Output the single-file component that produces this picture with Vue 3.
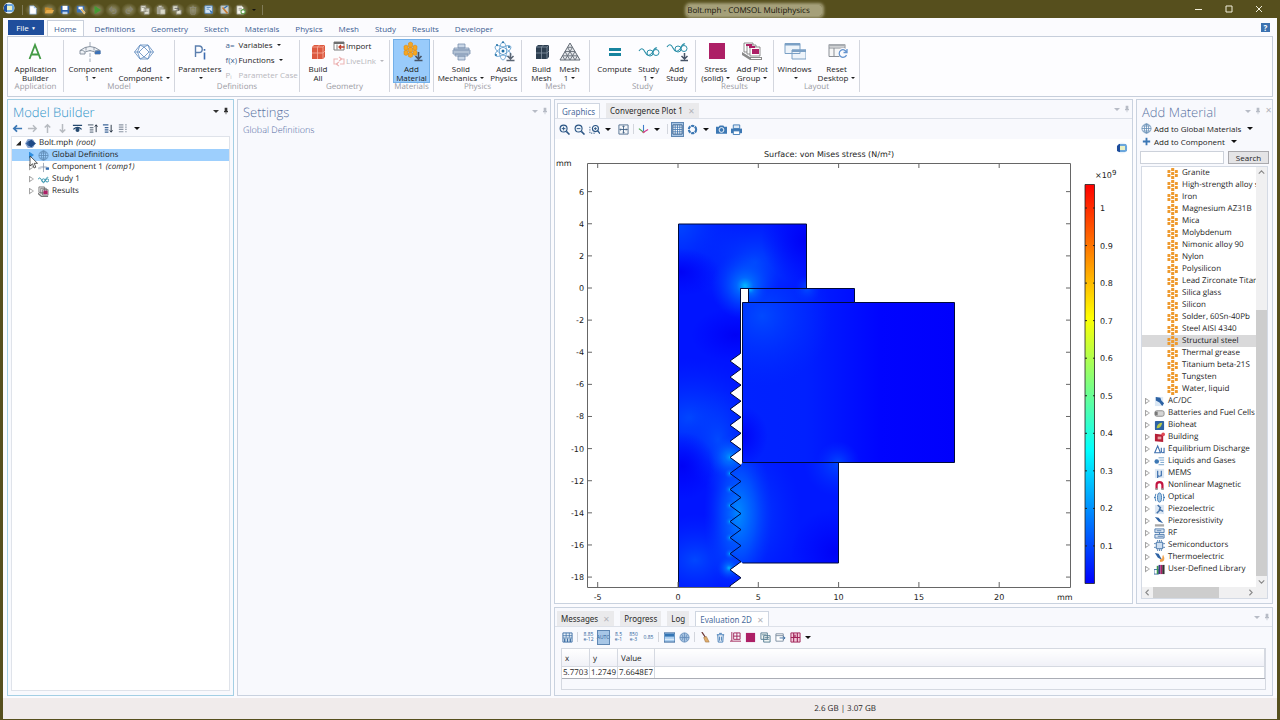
<script setup>
const quick = ['doc', 'folder', 'save', 'saveas', 'play', 'undo', 'redo', 'copy', 'paste', 'dup', 'trash', 'selbox', 'pick', 'docadd']
const menus = ['Home', 'Definitions', 'Geometry', 'Sketch', 'Materials', 'Physics', 'Mesh', 'Study', 'Results', 'Developer']

const groups = [
  { name: 'Application', big: [{ icon: 'app', a: 'Application', b: 'Builder' }] },
  { name: 'Model', big: [{ icon: 'component', a: 'Component', b: '1', drop: true }, { icon: 'addcomp', a: 'Add', b: 'Component', drop: true }] },
  {
    name: 'Definitions',
    big: [{ icon: 'params', a: 'Parameters', b: '', drop: true }],
    small: [
      { glyph: 'a=', text: 'Variables', drop: true },
      { glyph: 'f(x)', text: 'Functions', drop: true },
      { glyph: 'Pᵢ', text: 'Parameter Case', off: true }
    ]
  },
  {
    name: 'Geometry',
    big: [{ icon: 'buildall', a: 'Build', b: 'All' }],
    small: [
      { icon: 'import', text: 'Import' },
      { icon: 'livelink', text: 'LiveLink', drop: true, off: true }
    ]
  },
  { name: 'Materials', big: [{ icon: 'addmat', a: 'Add', b: 'Material', on: true }] },
  { name: 'Physics', big: [{ icon: 'solid', a: 'Solid', b: 'Mechanics', drop: true }, { icon: 'addphys', a: 'Add', b: 'Physics' }] },
  { name: 'Mesh', big: [{ icon: 'buildmesh', a: 'Build', b: 'Mesh' }, { icon: 'mesh', a: 'Mesh', b: '1', drop: true }] },
  { name: 'Study', big: [{ icon: 'compute', a: 'Compute', b: '' }, { icon: 'study', a: 'Study', b: '1', drop: true }, { icon: 'addstudy', a: 'Add', b: 'Study' }] },
  { name: 'Results', big: [{ icon: 'stress', a: 'Stress', b: '(solid)', drop: true }, { icon: 'plotgroup', a: 'Add Plot', b: 'Group', drop: true }] },
  { name: 'Layout', big: [{ icon: 'windows', a: 'Windows', b: '', drop: true }, { icon: 'reset', a: 'Reset', b: 'Desktop', drop: true }] }
]

const treeTools = ['left', 'right', 'up', 'down', 'eye', 'listup', 'listdown', 'listmore']
const tree = [
  { icon: 'globe', text: 'Global Definitions', on: true },
  { icon: 'comp', text: 'Component 1', note: '(comp1)' },
  { icon: 'wave', text: 'Study 1' },
  { icon: 'results', text: 'Results' }
]

const materials = ['Granite', 'High-strength alloy steel', 'Iron', 'Magnesium AZ31B', 'Mica', 'Molybdenum', 'Nimonic alloy 90', 'Nylon', 'Polysilicon', 'Lead Zirconate Titanate', 'Silica glass', 'Silicon', 'Solder, 60Sn-40Pb', 'Steel AISI 4340', 'Structural steel', 'Thermal grease', 'Titanium beta-21S', 'Tungsten', 'Water, liquid']
const libraries = [
  ['acdc', 'AC/DC'], ['battery', 'Batteries and Fuel Cells'], ['bioheat', 'Bioheat'], ['building', 'Building'],
  ['delta', 'Equilibrium Discharge'], ['liquid', 'Liquids and Gases'], ['mems', 'MEMS'], ['magnet', 'Nonlinear Magnetic'],
  ['optical', 'Optical'], ['piezo', 'Piezoelectric'], ['piezor', 'Piezoresistivity'], ['rf', 'RF'],
  ['semi', 'Semiconductors'], ['thermo', 'Thermoelectric'], ['books', 'User-Defined Library']
]

/* Plot coordinates: 16.06 units per millimetre, origin at (678, 288) */
const px = (mm) => 678 + mm * 16.06
const py = (mm) => 288 - mm * 16.06
const xTicks = [-5, 0, 5, 10, 15, 20]
const yTicks = [6, 4, 2, 0, -2, -4, -6, -8, -10, -12, -14, -16, -18]
const barTicks = [1, 0.9, 0.8, 0.7, 0.6, 0.5, 0.4, 0.3, 0.2, 0.1]
const barY = (v) => 208 + (1 - v) * 375.5

const tooth = 16.06
const roots = Array.from({ length: 15 }, (_, i) => 361 + i * tooth)
const zigzag = roots.map((y) => `L730 ${y} L741 ${y + tooth / 2}`)
zigzag[zigzag.length - 1] = `L730 ${roots[14]} V587.5`
const bolt = `M678.5 224 H806.5 V288.5 H740.5 V353.5 ${zigzag.join(' ')} H678.5 Z`
const mated = roots.slice(6, 13)
const nut = `M742.5 462.5 L741 465 ${mated.slice(1).map((y) => `L730 ${y} L741 ${y + tooth / 2}`).join(' ')} L742.5 563 H838.5 V462.5 Z`
</script>

<template>
  <svg class="defs" aria-hidden="true">
    <symbol id="i-logo" viewBox="0 0 12 12"><circle cx="6" cy="6" r="5.500" fill="#e8f1fb"/><path d="M1 4l2-2h6v8H3l-2-1z" fill="#1d4d9c"/><path d="M4 2h6l1 2v5l-2 1H4z" fill="#6aa6dc"/><rect x="4" y="4" width="5" height="4" fill="#e9f0c4"/></symbol>
    <symbol id="i-doc" viewBox="0 0 12 12"><path d="M2 1h5l3 3v7H2z" fill="#fff" stroke="#6a92c0" stroke-width=".7"/><path d="M7 1v3h3" fill="#9fc0e6"/></symbol>
    <symbol id="i-folder" viewBox="0 0 12 12"><path d="M1 3h4l1 1h4v6H1z" fill="#c98d2c"/><path d="M3 6h9l-2 4H1z" fill="#e5ac4c"/></symbol>
    <symbol id="i-save" viewBox="0 0 12 12"><path d="M1 1h10v9H1z" fill="#2a5fa8"/><path d="M3 1h6v5H3z" fill="#fff"/><path d="M3 8h6v3H3z" fill="#bcd2ec"/></symbol>
    <symbol id="i-saveas" viewBox="0 0 12 12"><path d="M1 1h9v8H1z" fill="#3b70b6"/><path d="M3 2h5v3H3z" fill="#fff"/><path d="M5 5l2-1 4 5-1 2z" fill="#e9b353" stroke="#fff" stroke-width=".5"/></symbol>
    <symbol id="i-play" viewBox="0 0 12 12"><path d="M3 1l8 5-8 5z" fill="#459a35"/></symbol>
    <symbol id="i-undo" viewBox="0 0 12 12"><path d="M3 5h4a2 2 0 0 1 0 5H5M5 2L2 5l3 3" fill="none" stroke="#85836f" stroke-width="1.600"/></symbol>
    <symbol id="i-redo" viewBox="0 0 12 12"><path d="M9 5H5a2 2 0 0 0 0 5h2M7 2l3 3-3 3" fill="none" stroke="#85836f" stroke-width="1.600"/></symbol>
    <symbol id="i-copy" viewBox="0 0 12 12"><path d="M1 1h6v7H1zM5 4h6v7H5z" fill="#eeeedf" stroke="#8a8878"/><path d="M6 6h4M6 8h4M2 3h4" stroke="#8a8878" stroke-width=".8"/></symbol>
    <symbol id="i-paste" viewBox="0 0 12 12"><path d="M1 2h8v9H1z" fill="#a5a392"/><path d="M3 1h4v2H3zM5 5h6v6H5z" fill="#dad9c9" stroke="#8a8878" stroke-width=".6"/></symbol>
    <symbol id="i-dup" viewBox="0 0 12 12"><path d="M1 1h6v6H1zM5 6h6v5H5z" fill="#e3e2d2" stroke="#7e7c6c"/><path d="M3 4h5v3" fill="none" stroke="#555"/></symbol>
    <symbol id="i-trash" viewBox="0 0 12 12"><path d="M2 3h8M5 1.500h2M3 3l.5 8h5L9 3M5 5v5M7 5v5" fill="none" stroke="#8e8c78"/></symbol>
    <symbol id="i-selbox" viewBox="0 0 12 12"><path d="M1 1h9v9H1z" fill="#d6e6f5" stroke="#4e83bd"/><path d="M3 3h5M3 5h3" stroke="#4e83bd"/><path d="M6 5l5 4-2 0 0 2z" fill="#2a6cb1"/></symbol>
    <symbol id="i-pick" viewBox="0 0 12 12"><path d="M1 1h9v9H1z" fill="#cfd0ca" stroke="#93a9b8" stroke-width=".8"/><path d="M3 3l6 7" stroke="#c57c35" stroke-width="2"/><path d="M9 1l-4 3" stroke="#2a6cb1" stroke-width="1.400"/></symbol>
    <symbol id="i-docadd" viewBox="0 0 12 12"><path d="M1 1h6l2 2v8H1z" fill="#fafaf0" stroke="#8a8878" stroke-width=".8"/><path d="M3 4h4M3 6h3" stroke="#777" stroke-width=".8"/><circle cx="8.500" cy="8" r="2.500" fill="#fff" stroke="#5d9d49" stroke-width="1.300"/></symbol>

    <symbol id="i-app" viewBox="0 0 22 22"><path d="M5.500 18L11 4l5.500 14M7.500 13.500h7" fill="none" stroke="#439a45" stroke-width="1.800"/></symbol>
    <symbol id="i-component" viewBox="0 0 22 22"><path d="M11 1v20" stroke="#8a97a8" stroke-width=".8" stroke-dasharray="4 1.500"/><path d="M1 13V9.500q10-8 20 0V13h-5v-2q-5-3-10 0v2z" fill="#eef1f5" stroke="#7d8997" stroke-width=".9"/><path d="M16 9.500h5.500V13H16z" fill="#3d72b8"/><path d="M1 9.500q3-1 5 1.500M21 9.500q-3-1-5 1.500M7 6v3.500M15 6v3.500" fill="none" stroke="#7d8997" stroke-width=".8"/></symbol>
    <symbol id="i-addcomp" viewBox="0 0 22 22"><path d="M7 4h8l5.500 7L15 18H7L1.500 11z M7 4l-2.500 7L7 18M15 4l2.500 7L15 18M11 6l5 5-5 5-5-5z M1.500 11H6M16 11h4.500M7 4l4 2 4-2M7 18l4-2 4 2" fill="none" stroke="#6c94c4" stroke-width=".9"/></symbol>
    <symbol id="i-params" viewBox="0 0 22 22"><path d="M6.500 16V5h3.500a3.200 3.200 0 0 1 0 6.500H6.500" fill="none" stroke="#5b7fae" stroke-width="1.400"/><path d="M15.500 11.500v7M15.500 8v1.700" stroke="#3d6cb0" stroke-width="1.600"/></symbol>
    <symbol id="i-buildall" viewBox="0 0 22 22"><path d="M5 6l2-2h11v12l-2 2H5z" fill="#dc5a41"/><path d="M5 6h11v12M10.500 6v12M5 12h11M7 4l-2 2M12.500 4l-2 2M18 4l-2 2M16 12l2-2" fill="none" stroke="#f7b0a0" stroke-width=".8"/></symbol>
    <symbol id="i-buildmesh" viewBox="0 0 22 22"><path d="M5 6l2-2h11v12l-2 2H5z" fill="#2c3e50"/><path d="M5 6h11v12M10.500 6v12M5 12h11M7 4l-2 2M12.500 4l-2 2M18 4l-2 2M16 12l2-2" fill="none" stroke="#8796a4" stroke-width=".8"/></symbol>
    <symbol id="i-addmat" viewBox="0 0 22 22"><g fill="#f5a623" stroke="#dd850c" stroke-width=".5"><path d="M7.500 2l2-1 2 1v3.500l-2 1-2-1zM3 5l2-1 2 1v3.500l-2 1-2-1zM12 5l2-1 2 1v3.500l-2 1-2-1zM7.500 7l2-1 2 1v3.500l-2 1-2-1zM3 10l2-1 2 1v3.500l-2 1-2-1zM12 10l2-1 2 1v3.500l-2 1-2-1zM7.500 12l2-1 2 1v3.500l-2 1-2-1z"/></g><path d="M17.500 11v7M14.500 15l3 3 3-3M13.500 19.500h8" fill="none" stroke="#465366" stroke-width="1.600"/></symbol>
    <symbol id="i-solid" viewBox="0 0 22 22"><path d="M8 3h7v4H8zM4 7h15v2H4zM3 9h17v4H3zM5 13h13v2H5zM8 15h7v4H8z" fill="#c9d6e6" stroke="#7890ad" stroke-width=".8"/><path d="M3 11h17" stroke="#7890ad" stroke-width=".6"/></symbol>
    <symbol id="i-addphys" viewBox="0 0 22 22"><g fill="none" stroke="#5d9ccc" stroke-width=".8"><ellipse cx="10" cy="10" rx="3.500" ry="9"/><ellipse cx="10" cy="10" rx="3.500" ry="9" transform="rotate(60 10 10)"/><ellipse cx="10" cy="10" rx="3.500" ry="9" transform="rotate(-60 10 10)"/></g><g fill="#1c6ea4"><circle cx="10" cy="10" r="1.500"/><circle cx="4" cy="4" r="1"/><circle cx="16" cy="6" r="1"/><circle cx="3" cy="14" r="1"/><circle cx="10" cy="1.300" r="1"/></g><path d="M17.500 12v6M14.500 15l3 3 3-3M13.500 19.500h8" fill="none" stroke="#5b6675" stroke-width="1.500"/></symbol>
    <symbol id="i-mesh" viewBox="0 0 22 22"><path d="M11 2l10 17H1z" fill="#e3e6ea" stroke="#656d77"/><path d="M8.500 6.300h5M6 10.500h10M3.500 14.800h15M8.500 6.300l7.500 12.700M13.500 6.300L6 19M6 10.500l5 8.500M16 10.500L11 19M3.500 14.800L6 19M18.500 14.800L16 19" fill="none" stroke="#656d77" stroke-width=".9"/></symbol>
    <symbol id="i-compute" viewBox="0 0 22 22"><path d="M5 7h12v3H5zM5 12h12v3H5z" fill="#17849f"/></symbol>
    <symbol id="i-study" viewBox="0 0 22 22"><path d="M1 10q3-5 6 1t7 1q3-6 5-5" fill="none" stroke="#2b8fa8" stroke-width="1.100"/><circle cx="12" cy="12" r="3" fill="none" stroke="#2b8fa8"/><circle cx="18" cy="11.500" r="3" fill="none" stroke="#2b8fa8"/></symbol>
    <symbol id="i-addstudy" viewBox="0 0 22 22"><path d="M1 6q3-5 6 1t7 1q3-6 5-5" fill="none" stroke="#2b8fa8" stroke-width="1.100"/><circle cx="12" cy="8" r="3" fill="none" stroke="#2b8fa8"/><circle cx="18" cy="7.500" r="3" fill="none" stroke="#2b8fa8"/><path d="M18.500 12v6M15.500 15l3 3 3-3M14.500 19.500h7.500" fill="none" stroke="#465366" stroke-width="1.500"/></symbol>
    <symbol id="i-stress" viewBox="0 0 22 22"><path d="M4 2h16v16H4z" fill="#ad1f66"/></symbol>
    <symbol id="i-plotgroup" viewBox="0 0 22 22"><g fill="#fff" stroke="#757575" stroke-width=".8"><path d="M3 2h9v9H3z"/><path d="M6 4h9v9H6z"/><path d="M9 6h10v9H9z"/></g><path d="M5 3h6v2H5zM8 5h6v2H8zM11 8h7v5h-7z" fill="#ad1f66"/><path d="M1 11l8 5h12v3H9l-8-5z" fill="#8a8a8a"/><path d="M10 17.500h10" stroke="#fff"/></symbol>
    <symbol id="i-windows" viewBox="0 0 22 22"><g fill="#eef4fa" stroke="#7ba0c5"><path d="M1 2.500h15v10H1zM8 9h14v9H8z"/></g><path d="M1 2h15v2.500H1zM8 8.500h14v2.500H8z" fill="#7ba0c5"/></symbol>
    <symbol id="i-reset" viewBox="0 0 22 22"><path d="M3 3.500h16v12H3zM3 7h16M8 7v8.500" fill="#f6f6f6" stroke="#8a8f96"/><path d="M3 3h16v2.500H3z" fill="#a8acb1"/><circle cx="17" cy="12" r="5" fill="#fbfbfe"/><path d="M20.500 11a3.800 3.800 0 1 0 0 3M21 8v3.500h-3.500" fill="none" stroke="#6594cf" stroke-width="1.300"/></symbol>
    <symbol id="i-import" viewBox="0 0 12 12"><path d="M1 2h10v8H1zM4 4.500v5" fill="#fff" stroke="#6f6f6f" stroke-width=".9"/><path d="M1 2h10v2H1z" fill="#6f6f6f"/><path d="M11.500 7H6M8 5L6 7l2 2" fill="none" stroke="#c33d27" stroke-width="1.300"/></symbol>
    <symbol id="i-livelink" viewBox="0 0 12 12"><path d="M5 4H1v5h4M7 4h4v5H7M6 2l3 2-3 2M6 7L3 9l3 2" fill="none" stroke="#edb6b6" stroke-width="1.100"/></symbol>

    <symbol id="i-left" viewBox="0 0 12 12"><path d="M11 6H2M5.500 2.500L2 6l3.500 3.500" fill="none" stroke="#3b77b5" stroke-width="1.900"/></symbol>
    <symbol id="i-right" viewBox="0 0 12 12"><path d="M1 6h9M6.500 2.500L10 6 6.500 9.500" fill="none" stroke="#b6bac0" stroke-width="1.600"/></symbol>
    <symbol id="i-up" viewBox="0 0 12 12"><path d="M6 11V2M3 5l3-3 3 3" fill="none" stroke="#b6bac0" stroke-width="1.600"/></symbol>
    <symbol id="i-down" viewBox="0 0 12 12"><path d="M6 1v9M3 7l3 3 3-3" fill="none" stroke="#b6bac0" stroke-width="1.600"/></symbol>
    <symbol id="i-eye" viewBox="0 0 12 12"><path d="M1 2.500h10M1.500 7Q6 2.500 10.500 7" fill="none" stroke="#24496f" stroke-width="1.400"/><circle cx="6" cy="7.500" r="2.200" fill="#24496f"/></symbol>
    <symbol id="i-listup" viewBox="0 0 12 12"><path d="M1 2h6M3 5h4M3 7.500h4M3 10h4" stroke="#72808f" stroke-width="1.200"/><path d="M10 10V2M8.500 4L10 2l1.500 2" fill="none" stroke="#222f40"/></symbol>
    <symbol id="i-listdown" viewBox="0 0 12 12"><path d="M1 2h6M3 5h4M3 7.500h4M3 10h4" stroke="#3d6597" stroke-width="1.400"/><path d="M10 2v8M8.500 8l1.500 2 1.500-2" fill="none" stroke="#222f40"/></symbol>
    <symbol id="i-listmore" viewBox="0 0 12 12"><path d="M2 2h5M2 4.500h5M2 7h5M2 9.500h5M9 2h1.500M9 4.500h1.500M9 7h1.500M9 9.500h1.500" stroke="#8b95a3" stroke-width="1.200"/></symbol>
    <symbol id="i-root" viewBox="0 0 12 12"><path d="M3 1h5l2 2v6l-2 2H3L0 6z" fill="#8aa5cf"/><path d="M7 2l5 4-5 4-4-2V4z" fill="#1f4a86"/><path d="M1 6l3-3v6z" fill="#35619f"/></symbol>
    <symbol id="i-globe" viewBox="0 0 12 12"><g fill="none" stroke="#5a86b0" stroke-width=".8"><circle cx="6" cy="6" r="5"/><ellipse cx="6" cy="6" rx="2.300" ry="5"/><path d="M1 6h10M2 3.300h8M2 8.700h8M6 1v10"/></g></symbol>
    <symbol id="i-comp" viewBox="0 0 12 12"><path d="M0 8V6q6-4 12 0v2H9V7q-3-1-6 0v1z" fill="#c9cfd9"/><path d="M8.500 6H12v2.500H8.500z" fill="#336cb3"/><path d="M6 1v10" stroke="#8592a3" stroke-width=".8"/></symbol>
    <symbol id="i-wave" viewBox="0 0 12 12"><path d="M0 6q2-4 4 1t4 0q2-5 3-3" fill="none" stroke="#2b8fa8"/><circle cx="6" cy="7" r="1.700" fill="none" stroke="#2b8fa8"/><circle cx="10" cy="7" r="1.700" fill="none" stroke="#2b8fa8"/></symbol>
    <symbol id="i-results" viewBox="0 0 12 12"><path d="M1 1h6v6H1zM3 2.500h6v6H3zM5 4h6v6H5z" fill="#eee" stroke="#666" stroke-width=".8"/><path d="M6 5h4.500v4H6z" fill="#ad1f66"/><path d="M0 8l4 3.500h7" fill="none" stroke="#777" stroke-width="1.500"/></symbol>
    <symbol id="i-plus" viewBox="0 0 12 12"><path d="M6 2v8M2 6h8" stroke="#3b77b5" stroke-width="2"/></symbol>
    <symbol id="i-pin" viewBox="0 0 12 12"><path d="M4 1h4v5h1v2H3V6h1zM5.500 8h1v3h-1z" fill="currentColor"/></symbol>

    <symbol id="i-zin" viewBox="0 0 12 12"><circle cx="5" cy="5" r="3.800" fill="#eef4fa" stroke="#2b5584" stroke-width="1.200"/><path d="M8 8l3.500 3.500" stroke="#2b5584" stroke-width="1.700"/><path d="M3 5h4M5 3v4" stroke="#2b5584"/></symbol>
    <symbol id="i-zout" viewBox="0 0 12 12"><circle cx="5" cy="5" r="3.800" fill="#eef4fa" stroke="#2b5584" stroke-width="1.200"/><path d="M8 8l3.500 3.500" stroke="#2b5584" stroke-width="1.700"/><path d="M3 5h4" stroke="#2b5584"/></symbol>
    <symbol id="i-zbox" viewBox="0 0 12 12"><path d="M1 3v7h6" fill="none" stroke="#2b5584" stroke-dasharray="1.500 1.200"/><circle cx="7" cy="5" r="3.300" fill="#eef4fa" stroke="#2b5584" stroke-width="1.200"/><path d="M9.500 7.500L12 10.500" stroke="#2b5584" stroke-width="1.600"/><path d="M5.500 5h3M7 3.500v3" stroke="#2b5584"/></symbol>
    <symbol id="i-extents" viewBox="0 0 12 12"><path d="M1 1h10v10H1z" fill="#f4f6f9" stroke="#516e8f"/><path d="M6 2v8M2 6h8M5 3l1-1 1 1M5 9l1 1 1-1M3 5L2 6l1 1M9 5l1 1-1 1" fill="none" stroke="#35587e" stroke-width=".9"/></symbol>
    <symbol id="i-axes" viewBox="0 0 12 12"><path d="M6 8V1" stroke="#3f7dc9" stroke-width="1.200"/><path d="M6 9l5-3" stroke="#d2338c" stroke-width="1.300"/><path d="M6 9L1 5" stroke="#47a84a" stroke-width="1.200"/><circle cx="6" cy="9" r="1.200" fill="#c8557c"/></symbol>
    <symbol id="i-grid" viewBox="0 0 12 12"><path d="M1 1h10v10H1z" fill="#fff" stroke="#2b5584"/><path d="M3.500 1v10M6 1v10M8.500 1v10M1 3.500h10M1 6h10M1 8.500h10" stroke="#4478b0" stroke-width=".9"/></symbol>
    <symbol id="i-wheel" viewBox="0 0 12 12"><circle cx="6" cy="6" r="4" fill="none" stroke="#3d78b4" stroke-width="2.300" stroke-dasharray="3.400 .8"/></symbol>
    <symbol id="i-camera" viewBox="0 0 12 12"><path d="M0 3h3l1-1.500h4L9 3h3v7.500H0z" fill="#3d78b4"/><circle cx="6" cy="6.500" r="2.600" fill="#3d78b4" stroke="#fff"/></symbol>
    <symbol id="i-print" viewBox="0 0 12 12"><path d="M2.500 1h7v4h-7z" fill="#dce8f4" stroke="#3d78b4"/><path d="M0 5h12v5H0z" fill="#3d78b4"/><path d="M2.500 7.500h7v4h-7z" fill="#fff" stroke="#3d78b4"/></symbol>

    <symbol id="i-table" viewBox="0 0 12 12"><path d="M1 1h10v10H1z" fill="#e8f0f8" stroke="#3d6fa5"/><path d="M1 4h10M4.500 1v5M8 1v5M1 6.500h10" stroke="#3d6fa5" stroke-width=".8"/><path d="M3 7v4M6 7v4M9 7v4" stroke="#3d6fa5" stroke-width="1.500"/></symbol>
    <symbol id="i-halfgrid" viewBox="0 0 12 12"><path d="M0 1h12v10H0z" fill="#a9cdef" stroke="#2f5f94"/><path d="M1 2h10v3H1z" fill="#3475b5"/><path d="M1 8h10" stroke="#e7f1fa"/></symbol>
    <symbol id="i-ball" viewBox="0 0 12 12"><circle cx="6" cy="6" r="5" fill="#a9c5e2" stroke="#6c94c0"/><path d="M1 6h10M6 1v10M3 2.500q3 3.500 0 7M9 2.500q-3 3.500 0 7" fill="none" stroke="#5f88b8" stroke-width=".8"/></symbol>
    <symbol id="i-broom" viewBox="0 0 12 12"><path d="M2 0l4 6" stroke="#6b3636" stroke-width="1.400"/><path d="M4 6l3-1 3 6H6z" fill="#e0ad6b" stroke="#9c7040" stroke-width=".6"/></symbol>
    <symbol id="i-bin" viewBox="0 0 12 12"><path d="M2 3h8M4.500 1.500h3M3 3l.5 8h5L9 3M5 5v4.500M7 5v4.500" fill="none" stroke="#3d78b4"/></symbol>
    <symbol id="i-plottab" viewBox="0 0 12 12"><path d="M2 0v10h10M4 1h7v7H4zM4 4.500h7M7.500 1v7M0 10h2" fill="none" stroke="#a02258"/></symbol>
    <symbol id="i-square" viewBox="0 0 12 12"><path d="M1 1h10v10H1z" fill="#ad1f66"/></symbol>
    <symbol id="i-copytab" viewBox="0 0 12 12"><path d="M1 1h7v7H1zM4 4h7v7H4z" fill="#f2f6f4" stroke="#557d92"/><path d="M5 6h5M5 8h5M2 3h5" stroke="#557d92" stroke-width=".8"/></symbol>
    <symbol id="i-export" viewBox="0 0 12 12"><path d="M1 2h8v8H1zM1 4h8" fill="#fff" stroke="#7b8ca0"/><path d="M5 6.500h6M9 4.500l2 2-2 2" fill="none" stroke="#3d6fa5"/></symbol>
    <symbol id="i-redtab" viewBox="0 0 12 12"><path d="M1 1h10v10H1z" fill="#f2c9da" stroke="#a02258"/><path d="M4 1v10M8 1v10M1 6h10M5.500 3v3" stroke="#a02258" stroke-width="1.200"/></symbol>

    <symbol id="i-mat" viewBox="0 0 12 12"><g fill="#ee9a2e"><rect x="4.500" y="0" width="3.400" height="3.400" rx=".6"/><rect x="4.500" y="4.300" width="3.400" height="3.400" rx=".6"/><rect x="4.500" y="8.600" width="3.400" height="3.400" rx=".6"/><rect x=".5" y="2.200" width="3.200" height="3.300" rx=".6"/><rect x=".5" y="6.500" width="3.200" height="3.300" rx=".6"/><rect x="8.600" y="2.200" width="3.200" height="3.300" rx=".6"/><rect x="8.600" y="6.500" width="3.200" height="3.300" rx=".6"/></g></symbol>
    <symbol id="i-acdc" viewBox="0 0 12 12"><path d="M1 1h9v10H1z" fill="#dbe8f5"/><path d="M2 1l5 1 1 3 3 3-2 3-3-4-4-2z" fill="#2d62a3"/></symbol>
    <symbol id="i-battery" viewBox="0 0 12 12"><rect x="1" y="3" width="10" height="6" rx="2" fill="#d5d5d5" stroke="#8b8b8b"/><path d="M1 4h3v4H1z" fill="#777"/></symbol>
    <symbol id="i-bioheat" viewBox="0 0 12 12"><rect x="1" y="1" width="10" height="10" rx="1" fill="#2d62a3"/><path d="M3 8q1-5 6-5-1 6-6 6z" fill="#b6c84a"/></symbol>
    <symbol id="i-building" viewBox="0 0 12 12"><path d="M1 2l9 1v8l-9-1z" fill="#b51f38"/><path d="M4 5h4v3H4z" fill="#e9a0a0"/><circle cx="10" cy="2.500" r="2" fill="#e04a55"/></symbol>
    <symbol id="i-delta" viewBox="0 0 12 12"><path d="M.8 9.500L4 2l3 7.500zM8 4v3.500q0 2 1.500 2T11 7.500V4M11 7.500v2.500" fill="none" stroke="#3d6fae" stroke-width="1.200"/></symbol>
    <symbol id="i-liquid" viewBox="0 0 12 12"><circle cx="3" cy="6" r="2.500" fill="#3d78b4"/><path d="M5 2h6M6 4.500h5M7 7h4M5 9.500h6" stroke="#6f9cc8"/></symbol>
    <symbol id="i-mems" viewBox="0 0 12 12"><path d="M1 1h10v10H1z" fill="#dde8f3"/><path d="M4 11V3v4q0 2 2 2t2-2V3v6" fill="none" stroke="#3d6fae" stroke-width="1.300"/></symbol>
    <symbol id="i-magnet" viewBox="0 0 12 12"><path d="M2.800 10V5.500a3.200 3.200 0 0 1 6.400 0V10" fill="none" stroke="#c21440" stroke-width="2.400"/><path d="M1.500 9h2.600v2H1.500zM8 9h2.600v2H8z" fill="#999"/></symbol>
    <symbol id="i-optical" viewBox="0 0 12 12"><ellipse cx="6" cy="6" rx="2.200" ry="5" fill="#a9cbe8" stroke="#3d78b4"/><path d="M2 2q-2 4 0 8M10 2q2 4 0 8M0 6h2M10 6h2" fill="none" stroke="#3d78b4"/></symbol>
    <symbol id="i-piezo" viewBox="0 0 12 12"><path d="M1 1h10v10H1z" fill="#dbe6f2"/><path d="M4 1l3 3-1 2 4 2M7 6L3 10" fill="none" stroke="#4572a8" stroke-width="1.600"/></symbol>
    <symbol id="i-piezor" viewBox="0 0 12 12"><path d="M1 9l10 0v2.500H1z" fill="#a8a8a8"/><path d="M1 1l4 1 5 6-5-2z" fill="#2d62a3"/></symbol>
    <symbol id="i-rf" viewBox="0 0 12 12"><path d="M1 1h10v4H1zM1 7h10v4H1z" fill="#dce7f2" stroke="#4b79ae"/><path d="M3 3h5M4 9h6M6 5v2" stroke="#4b79ae"/></symbol>
    <symbol id="i-semi" viewBox="0 0 12 12"><path d="M2.500 2.500h7v7h-7z" fill="#cfdff0" stroke="#3d6fa5"/><path d="M4 0v2M6 0v2M8 0v2M4 10v2M6 10v2M8 10v2M0 4h2M0 8h2M10 4h2M10 8h2" stroke="#3d6fa5" stroke-width=".9"/></symbol>
    <symbol id="i-thermo" viewBox="0 0 12 12"><path d="M1 1l4 1 4 7-5-3z" fill="#2d62a3"/><path d="M7 11q-2-3 2-4 0-3 1-4 2 4 1 6-1 2-4 2z" fill="#f0a04b"/></symbol>
    <symbol id="i-books" viewBox="0 0 12 12"><path d="M0 6h5v5H0z" fill="#fff" stroke="#3d6fa5"/><path d="M3 2h2v9H3z" fill="#3c9a50"/><path d="M5 1h2v10H5z" fill="#41338a"/><path d="M7 1h2v10H7z" fill="#ad1f66"/><path d="M9 1h2.500v10H9z" fill="#333"/></symbol>
  </svg>

  <div class="window">
    <header class="titlebar">
      <div class="quick">
        <svg class="ic logo"><use href="#i-logo"/></svg>
        <i class="qsep"></i>
        <button v-for="q in quick" :key="q" class="qbtn" :aria-label="q"><svg class="ic"><use :href="'#i-' + q"/></svg></button>
        <i class="caret"></i><i class="qsep"></i>
      </div>
      <h1><span>Bolt.mph - COMSOL Multiphysics</span></h1>
      <div class="sysbtns">
        <button aria-label="Minimize"><svg viewBox="0 0 10 10"><path d="M1 5.500h7"/></svg></button>
        <button aria-label="Maximize"><svg viewBox="0 0 10 10"><path d="M2 2h6v6H2z"/></svg></button>
        <button aria-label="Close"><svg viewBox="0 0 10 10"><path d="M2 2l6 6M8 2L2 8"/></svg></button>
      </div>
    </header>

    <div class="client">
      <nav class="menus">
        <button class="file">File <span>▼</span></button>
        <button v-for="(m, i) in menus" :key="m" class="menu" :class="{ on: i === 0 }">{{ m }}</button>
        <button class="help" aria-label="Help">?</button>
      </nav>

      <div class="ribbon">
        <section v-for="g in groups" :key="g.name" class="group">
          <div class="items">
            <button v-for="b in g.big" :key="b.icon" class="big" :class="{ on: b.on }">
              <svg><use :href="'#i-' + b.icon"/></svg>
              <span>{{ b.a }}</span>
              <span>{{ b.b }}<i v-if="b.drop" class="caret sm"></i></span>
            </button>
            <div v-if="g.small" class="smalls">
              <button v-for="s in g.small" :key="s.text" class="small" :class="{ off: s.off }">
                <svg v-if="s.icon" class="ic"><use :href="'#i-' + s.icon"/></svg>
                <b v-else>{{ s.glyph }}</b>
                {{ s.text }}<i v-if="s.drop" class="caret sm"></i>
              </button>
            </div>
          </div>
          <h2>{{ g.name }}</h2>
        </section>
      </div>

      <main class="work">
        <section class="panel builder">
          <header class="phead active"><h2>Model Builder</h2><span class="ctl dark"><i class="caret"></i><svg><use href="#i-pin"/></svg></span></header>
          <div class="treetools">
            <button v-for="t in treeTools" :key="t" :aria-label="t"><svg class="ic"><use :href="'#i-' + t"/></svg></button>
            <i class="caret"></i>
          </div>
          <ul class="tree">
            <li class="root"><i class="tw open"></i><svg class="ic"><use href="#i-root"/></svg>Bolt.mph <em>(root)</em></li>
            <li v-for="n in tree" :key="n.text" :class="{ on: n.on }">
              <i class="tw"></i><svg class="ic"><use :href="'#i-' + n.icon"/></svg>{{ n.text }} <em v-if="n.note">{{ n.note }}</em>
              <svg v-if="n.on" class="cursor" viewBox="0 0 10 14"><path d="M1 1v10l2.500-2.200L5.200 13l1.600-.8L5.200 8.300H8.500z" fill="#fff" stroke="#333" stroke-width=".8"/></svg>
            </li>
          </ul>
        </section>

        <section class="panel settings">
          <header class="phead"><h2>Settings</h2><span class="ctl"><i class="caret"></i><svg><use href="#i-pin"/></svg></span></header>
          <p>Global Definitions</p>
        </section>

        <section class="panel graphics">
          <div class="tabs">
            <button class="tab on">Graphics</button>
            <button class="tab">Convergence Plot 1<span class="x">✕</span></button>
            <span class="ctl"><i class="caret"></i><svg><use href="#i-pin"/></svg></span>
          </div>
          <div class="tools">
            <button aria-label="Zoom in"><svg class="ic"><use href="#i-zin"/></svg></button>
            <button aria-label="Zoom out"><svg class="ic"><use href="#i-zout"/></svg></button>
            <button aria-label="Zoom box"><svg class="ic"><use href="#i-zbox"/></svg><i class="caret"></i></button>
            <button aria-label="Zoom extents"><svg class="ic"><use href="#i-extents"/></svg></button>
            <i class="tsep"></i>
            <button aria-label="View"><svg class="ic"><use href="#i-axes"/></svg><i class="caret"></i></button>
            <i class="tsep"></i>
            <button class="lit" aria-label="Grid"><svg class="ic"><use href="#i-grid"/></svg></button>
            <button aria-label="Scene"><svg class="ic"><use href="#i-wheel"/></svg><i class="caret"></i></button>
            <button aria-label="Snapshot"><svg class="ic"><use href="#i-camera"/></svg></button>
            <button aria-label="Print"><svg class="ic"><use href="#i-print"/></svg></button>
          </div>
          <svg class="plot" viewBox="555 139 577 464" role="img" aria-label="Surface: von Mises stress">
            <defs>
              <linearGradient id="rainbow" x1="0" y1="0" x2="0" y2="1">
                <stop offset="0" stop-color="#f00"/><stop offset=".333" stop-color="#ff0"/><stop offset=".5" stop-color="#7fff7f"/><stop offset=".667" stop-color="#0ff"/><stop offset="1" stop-color="#00f"/>
              </linearGradient>
              <radialGradient id="hot"><stop offset="0" stop-color="#0bf"/><stop offset=".25" stop-color="#0080ff" stop-opacity=".7"/><stop offset="1" stop-color="#0040ff" stop-opacity="0"/></radialGradient>
              <radialGradient id="warm"><stop offset="0" stop-color="#0050ff" stop-opacity=".85"/><stop offset="1" stop-color="#0030ff" stop-opacity="0"/></radialGradient>
              <radialGradient id="cold"><stop offset="0" stop-color="#0000f4" stop-opacity=".9"/><stop offset="1" stop-color="#00f" stop-opacity="0"/></radialGradient>
              <radialGradient id="seam"><stop offset="0" stop-color="#0094ff" stop-opacity=".9"/><stop offset=".5" stop-color="#0070ff" stop-opacity=".5"/><stop offset="1" stop-color="#0040ff" stop-opacity="0"/></radialGradient>
              <linearGradient id="block"><stop offset="0" stop-color="#0022ff"/><stop offset=".3" stop-color="#0020ff"/><stop offset=".65" stop-color="#0004ff"/><stop offset="1" stop-color="#0000fc"/></linearGradient>
              <clipPath id="cbolt"><path :d="bolt"/></clipPath>
              <clipPath id="cblock"><path d="M748.500 288.500H854.500V302.500H954.500V462.500H742.500V302.500H748.500z"/></clipPath>
              <clipPath id="cnut"><path :d="nut"/></clipPath>
            </defs>
            <path d="M555 139h577v464H555z" fill="#fff"/>
            <g clip-path="url(#cbolt)">
              <path d="M678 224h130v364H678z" fill="#0014ff"/>
              <circle cx="678" cy="224" r="70" fill="url(#warm)"/>
              <ellipse cx="755" cy="262" rx="64" ry="54" fill="url(#warm)"/>
              <ellipse cx="680" cy="272" rx="40" ry="24" fill="url(#cold)"/>
              <circle cx="805" cy="240" r="44" fill="url(#cold)"/>
              <ellipse cx="735" cy="335" rx="44" ry="28" fill="url(#cold)"/>
              <ellipse cx="690" cy="418" rx="80" ry="60" fill="url(#warm)"/>
              <ellipse cx="718" cy="440" rx="34" ry="50" fill="url(#warm)"/>
              <circle cx="682" cy="466" r="34" fill="url(#cold)"/>
              <ellipse cx="695" cy="560" rx="56" ry="46" fill="url(#warm)"/>
              <ellipse cx="738" cy="514" rx="34" ry="84" fill="url(#seam)"/>
              <circle cx="745" cy="286" r="34" fill="url(#hot)"/>
              <circle cx="807" cy="287" r="12" fill="url(#warm)"/>
              <circle cx="730" cy="457" r="22" fill="url(#hot)"/>
              <circle cx="729" cy="568" r="12" fill="url(#hot)"/>
              <circle v-for="y in mated" :key="y" cx="730" :cy="y" r="6" fill="url(#hot)"/>
            </g>
            <g clip-path="url(#cblock)">
              <path d="M742 288h213v175H742z" fill="url(#block)"/>
              <ellipse cx="762" cy="316" rx="70" ry="70" fill="url(#warm)"/>
              <circle cx="750" cy="289" r="18" fill="url(#hot)"/>
              <circle cx="807" cy="289" r="14" fill="url(#warm)"/>
              <ellipse cx="742" cy="436" rx="26" ry="30" fill="url(#cold)"/>
              <circle cx="838" cy="463" r="22" fill="url(#warm)"/>
            </g>
            <g clip-path="url(#cnut)">
              <path d="M728 462h111v102H728z" fill="#0018ff"/>
              <ellipse cx="745" cy="515" rx="56" ry="80" fill="url(#warm)"/>
              <ellipse cx="738" cy="514" rx="34" ry="84" fill="url(#seam)"/>
              <circle cx="838" cy="463" r="34" fill="url(#warm)"/>
              <circle cx="835" cy="552" r="44" fill="url(#cold)"/>
            </g>
            <g fill="none" stroke="#000a3c">
              <path :d="bolt"/>
              <path d="M740.500 288.500H854.500V302.500H954.500V462.500H742.500V302.500M748.500 288.500v14M742.500 302.500h112M838.500 462.500V563H742.500"/>
            </g>
            <path d="M741.500 289v173" stroke="#fff"/>
            <path d="M587.500 163.500h483v424h-483z" fill="none" stroke="#666"/>
            <g stroke="#666">
              <path v-for="t in xTicks" :key="t" :d="`M${px(t)} 163v5M${px(t)} 587v-5`"/>
              <path v-for="t in yTicks" :key="t" :d="`M587 ${py(t)}h5M1071 ${py(t)}h-5`"/>
            </g>
            <g class="lbl">
              <text x="829" y="157" text-anchor="middle">Surface: von Mises stress (N/m²)</text>
              <text x="556" y="166">mm</text>
              <text v-for="t in xTicks" :key="'x' + t" :x="px(t)" y="600" text-anchor="middle">{{ t }}</text>
              <text x="1057" y="600">mm</text>
              <text v-for="t in yTicks" :key="'y' + t" x="584" :y="py(t) + 3" text-anchor="end">{{ t }}</text>
              <text x="1095" y="178">×10<tspan dy="-3" class="sup">9</tspan></text>
              <text v-for="t in barTicks" :key="'b' + t" x="1100" :y="barY(t) + 3">{{ t }}</text>
            </g>
            <path d="M1085 184.500h9.500v399H1085z" fill="url(#rainbow)" stroke="#222" stroke-width=".8"/>
            <path v-for="t in barTicks" :key="t" :d="`M1085 ${barY(t)}h2M1095 ${barY(t)}h-2`" stroke="#222"/>
            <use href="#i-logo" x="1116" y="142" width="12" height="12"/>
          </svg>
        </section>

        <section class="panel addmat">
          <header class="phead"><h2>Add Material</h2><span class="ctl"><i class="caret"></i><svg><use href="#i-pin"/></svg><span class="x">✕</span></span></header>
          <button class="link"><svg class="ic"><use href="#i-globe"/></svg>Add to Global Materials<i class="caret"></i></button>
          <button class="link"><svg class="ic"><use href="#i-plus"/></svg>Add to Component<i class="caret"></i></button>
          <form class="search" @submit.prevent><input type="text" aria-label="Search materials"><button>Search</button></form>
          <div class="library">
            <ul>
              <li v-for="m in materials" :key="m" class="mat" :class="{ on: m === 'Structural steel' }"><svg class="ic"><use href="#i-mat"/></svg>{{ m }}</li>
              <li v-for="[i, t] in libraries" :key="t"><i class="tw"></i><svg class="ic"><use :href="'#i-' + i"/></svg>{{ t }}</li>
            </ul>
            <div class="vbar"><svg viewBox="0 0 10 10"><path d="M2.500 6L5 3.500 7.500 6"/></svg><i></i><svg viewBox="0 0 10 10"><path d="M2.500 4L5 6.500 7.500 4"/></svg></div>
            <div class="hbar"><svg viewBox="0 0 10 10"><path d="M6 2.500L3.500 5 6 7.500"/></svg><i></i><svg viewBox="0 0 10 10"><path d="M4 2.500L6.500 5 4 7.500"/></svg></div>
          </div>
        </section>

        <section class="panel output">
          <div class="tabs">
            <button class="tab">Messages<span class="x">✕</span></button>
            <button class="tab">Progress</button>
            <button class="tab">Log</button>
            <button class="tab on">Evaluation 2D<span class="x">✕</span></button>
            <span class="ctl"><i class="caret"></i><svg><use href="#i-pin"/></svg></span>
          </div>
          <div class="tools">
            <button aria-label="Full precision"><svg class="ic"><use href="#i-table"/></svg></button>
            <i class="tsep"></i>
            <button class="num">8.85<br>e-12</button>
            <button class="num lit">AUTO</button>
            <button class="num">8.5<br>e-1</button>
            <button class="num">850<br>e-3</button>
            <button class="num">0.85</button>
            <i class="tsep"></i>
            <button v-for="t in ['halfgrid', 'ball']" :key="t" :aria-label="t"><svg class="ic"><use :href="'#i-' + t"/></svg></button>
            <i class="tsep"></i>
            <button v-for="t in ['broom', 'bin', 'plottab', 'square', 'copytab', 'export', 'redtab']" :key="t" :aria-label="t"><svg class="ic"><use :href="'#i-' + t"/></svg></button>
            <i class="caret"></i>
          </div>
          <div class="tablebox">
            <table>
              <thead><tr><th>x</th><th>y</th><th>Value</th><th class="rest"></th></tr></thead>
              <tbody><tr><td>5.7703</td><td>1.2749</td><td>7.6648E7</td><td></td></tr></tbody>
            </table>
          </div>
        </section>
      </main>

      <footer class="status">2.6 GB | 3.07 GB</footer>
    </div>
  </div>
</template>

<style>
html, body { margin: 0; background: #564f1d; }
</style>

<style scoped>
* { box-sizing: border-box; }
.defs { position: absolute; width: 0; height: 0; }
.window { display: flex; flex-direction: column; min-height: 100vh; padding: 0 3px 1px; background: #564f1d; font: 8px/12px "Open Sans", "Noto Sans", sans-serif; color: #1c1c1c; text-rendering: geometricPrecision; }
button { font: inherit; color: inherit; background: none; border: 0; padding: 0; margin: 0; }
h1, h2, p, ul { margin: 0; padding: 0; font-weight: 400; font-size: 8px; }
li { list-style: none; }
i { font-style: normal; }
.ic { width: 12px; height: 12px; flex: none; display: block; }
.caret { display: inline-block; flex: none; width: 0; height: 0; border: 3px solid transparent; border-top-color: #111; border-bottom: 0; vertical-align: 1px; }
.caret.sm { border-width: 2px; border-bottom: 0; margin-left: 3px; vertical-align: 2px; border-top-color: currentColor; }

.titlebar { display: grid; grid-template-columns: 1fr auto 1fr; align-items: center; height: 18px; }
.quick { display: flex; align-items: center; height: 18px; padding-top: 2px; }
.logo { margin-right: 5px; margin-top: -4px; }
.qsep { width: 1px; height: 10px; background: #807b58; margin: 0 2px; }
.qbtn { width: 16px; height: 14px; display: grid; place-items: center; background: radial-gradient(#c9c6ab99, #b9b69a00 70%); }
.qbtn .ic { width: 10px; height: 10px; }
.quick .caret { margin: 0 4px 0 3px; border-width: 2px; border-bottom: 0; }
h1 { color: #15140a; padding-left: 229px; line-height: 12px; margin-top: 3px; white-space: nowrap; }
h1 span { background: #a5a07a; box-shadow: 0 0 3px 2px #a5a07a; border-radius: 3px; padding-right: 12px; }
.sysbtns { display: flex; justify-content: flex-end; gap: 20px; padding-right: 13px; }
.sysbtns button, .sysbtns svg { width: 10px; height: 10px; display: block; }
.sysbtns path { fill: none; stroke: #f2efdc; }

.client { flex: 1; display: flex; flex-direction: column; background: #fbfbfe; }
.menus { display: flex; height: 19px; padding: 2px 5px 0; color: #3c6093; }
.file { width: 36px; height: 15px; background: #1f4e9c; color: #fff; }
.file span { font-size: 5px; vertical-align: 1px; }
.menu { padding: 0 8px; height: 17px; }
.menu.on { border: 1px solid #c9d0dc; border-bottom: 0; background: #fff; padding: 0 6px; margin-left: 3px; margin-right: 3px; }
.help { margin-left: auto; margin-top: 3px; margin-right: 2px; width: 9px; height: 9px; background: #3c72b0; color: #fff; font-weight: 700; line-height: 9px; }
.ribbon { margin: -1px 4px 0; border: 1px solid #c6cedb; background: #fdfdff; display: grid; grid-template-columns: 56px 111px 125px 90px 44px 88px 68px 106px 78px 86px 1fr; height: 61px; }
.group { border-right: 1px solid #d3d6de; margin: 3px 0 5px; display: flex; flex-direction: column; white-space: nowrap; }
.group h2 { text-align: center; color: #9b9ba3; line-height: 10px; margin-top: auto; }
.items { display: flex; justify-content: center; height: 42px; gap: 2px; }
.big { display: flex; flex-direction: column; align-items: center; padding: 1px 1px 0; line-height: 9px; border: 1px solid transparent; height: 44px; margin-top: -1px; }
.big svg { width: 22px; height: 22px; margin-bottom: 1px; }
.big span { min-height: 9px; display: block; }
.big.on { background: #99cbfb; border-color: #74b0e8; padding: 1px 2px 0; }
.smalls { display: flex; flex-direction: column; margin-top: -2px; }
.small { display: flex; align-items: center; gap: 1px; height: 15px; }
.small b { font-weight: 400; color: #3e5f8e; min-width: 12px; text-align: left; }
.off, .off b { color: #b7b7bd; }

.work { flex: 1; display: grid; grid-template-columns: 227px 314px 1fr 137px; grid-template-rows: 1fr 89px; column-gap: 3px; row-gap: 3px; padding: 2px 4px 2px; min-height: 0; }
.panel { background: #f8f9fd; border: 1px solid #c9d2df; min-width: 0; min-height: 0; display: flex; flex-direction: column; }
.builder { grid-row: 1 / 3; border-color: #a3cfe4; padding: 0 3px 4px; }
.settings { grid-row: 1 / 3; }
.output { grid-column: 3 / 5; grid-row: 2; }
.phead { display: flex; justify-content: space-between; height: 23px; padding: 2px 1px 0 5px; color: #5b74a3; }
.phead h2 { font: 300 13px/20px "Open Sans", "Noto Sans", sans-serif; }
.phead.active { color: #2f93c8; padding: 2px 0 0 2px; height: 22px; }
.ctl { display: flex; align-items: center; gap: 3px; color: #b7bcc6; height: 18px; margin-left: auto; }
.ctl .caret { border-top-color: #b7bcc6; }
.ctl.dark { color: #333; }
.ctl.dark .caret { border-top-color: #333; }
.ctl svg { width: 8px; height: 8px; }
.x { color: #b4b4ba; font-size: 8px; margin-left: 5px; }
.ctl .x { margin: 0; }
.treetools { display: flex; align-items: center; height: 12px; gap: 4px; padding-left: 1px; }
.treetools .ic { width: 11px; height: 11px; }
.treetools .caret { margin-left: 2px; }
.tree { flex: 1; margin-top: 2px; background: #fff; border: 1px solid #dfe3ea; }
.tree li, .library li { display: flex; align-items: center; gap: 3px; height: 12px; white-space: nowrap; }
.tree li { padding-left: 16px; position: relative; }
.tree .root { padding-left: 3px; }
.tree .on { background: #9dcffd; }
.tree .ic { width: 11px; height: 11px; }
.tw { width: 5px; height: 7px; margin: 0 1px; flex: none; background: #a4a4a4; clip-path: polygon(0 0, 100% 50%, 0 100%, 0 0, 1px 2px, 1px 5px, 4px 50%, 1px 2px); }
.tw.open { background: #222; height: 5px; clip-path: polygon(100% 0, 100% 100%, 0 100%); }
.on .tw { background: #2f8fe0; clip-path: polygon(0 0, 100% 50%, 0 100%); }
.tree .cursor { position: absolute; left: 17px; top: 6px; width: 10px; height: 14px; z-index: 2; }
.settings p { font-size: 9px; font-weight: 300; color: #4d65a0; padding: 0 5px; line-height: 14px; }

.tabs { display: flex; align-items: flex-end; gap: 6px; height: 19px; padding: 0 1px 0 2px; border-bottom: 1px solid #dde1e9; font-family: "Noto Sans", "Open Sans", sans-serif; flex: none; }
.tab { background: #eaeaec; height: 15px; padding: 1px 4px 0; color: #2a2a2a; white-space: nowrap; }
.tab.on { background: #fff; border: 1px solid #cfd6e1; border-bottom: 0; color: #4a6b9d; padding: 1px 4px 0; }
.tools { display: flex; align-items: center; height: 20px; padding: 0 4px; gap: 4px; flex: none; }
.tools button { display: flex; align-items: center; gap: 5px; height: 13px; }
.tools .ic { width: 11px; height: 11px; }
.tools .caret { margin-right: 3px; }
.tsep { width: 1px; height: 10px; background: #d3d6dd; }
.output .tools { padding-left: 7px; }
.output .tsep { margin-right: 1px; }
.lit { background: #a7c6e6; outline: 1px solid #5f87b3; }
.tools .num { width: 11px; justify-content: center; font-size: 5px; line-height: 5px; color: #2c5f9a; }
.plot { flex: 1; width: 100%; min-height: 0; background: #fff; display: block; }
.lbl { font: 8px "DejaVu Sans", "Open Sans", sans-serif; fill: #222; }
.sup { font-size: 7px; }

.addmat { padding: 0 4px 4px; }
.addmat .phead { padding: 2px 0 0 1px; height: 22px; margin-right: -4px; }
.link { display: flex; align-items: center; gap: 2px; height: 13px; white-space: nowrap; }
.link .ic { width: 11px; height: 11px; }
.link .caret { margin-left: 4px; }
.search { display: flex; gap: 4px; margin: 3px -1px 2px; }
.search input { flex: 1; min-width: 0; height: 13px; border: 1px solid #ccd1da; background: #fff; padding: 0 3px; font: inherit; }
.search button { width: 41px; height: 13px; border: 1px solid #a9a9ad; background: #e4e4e6; line-height: 10px; }
.library { flex: 1; min-height: 0; background: #fff; border: 1px solid #d4dae4; display: grid; grid-template-columns: 1fr 11px; grid-template-rows: 1fr 11px; }
.library ul { overflow: hidden; min-width: 0; }
.library li { padding-left: 2px; }
.library li .ic { width: 11px; height: 11px; }
.library .mat { padding-left: 25px; gap: 4px; }
.library li.on { background: #d9d9da; }
.vbar, .hbar { display: flex; background: #f0f0f1; }
.vbar { flex-direction: column; }
.hbar { grid-column: 1 / 3; padding-right: 11px; }
.vbar i { flex: 1; margin-top: 132px; background: #cdcdcd; }
.hbar i { flex: 1; margin-right: 26px; background: #cdcdcd; }
.vbar svg, .hbar svg { width: 11px; height: 11px; flex: none; fill: none; stroke: #8a8a8a; }

.tablebox { margin: 1px 6px 5px; border: 1px solid #d5d9e1; flex: 1; }
table { border-collapse: collapse; width: 100%; table-layout: auto; background: #fff; }
th, td { font-weight: 400; text-align: left; padding: 0 1px; border-right: 1px solid #d5d9e1; height: 12px; line-height: 11px; white-space: nowrap; }
th { height: 17px; padding: 2px 3px 0; background: linear-gradient(#fff, #f0f1f7); border-bottom: 1px solid #d5d9e1; }
td { border-bottom: 1px solid #aaadb5; }
.rest { width: 100%; }
.status { height: 21px; background: #f0ebeb; text-align: right; padding: 5px 401px 0 0; font-size: 8px; }
</style>
